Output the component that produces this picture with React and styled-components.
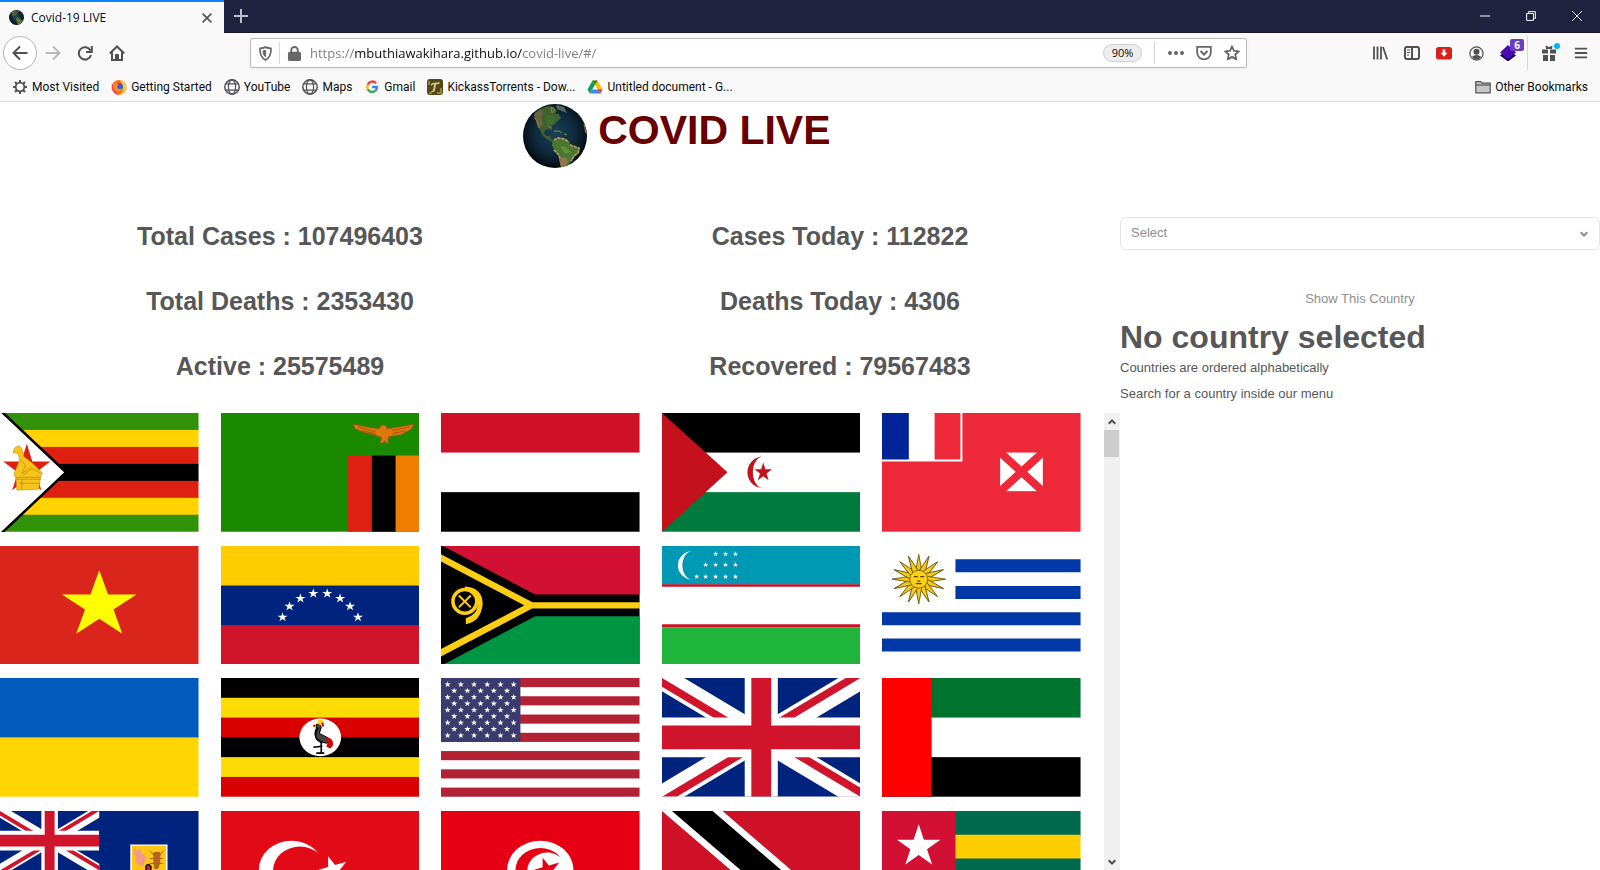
import React, { useRef, useState } from "react";
import styled, { createGlobalStyle } from "styled-components";

const GlobalStyle = createGlobalStyle`
  *, *::before, *::after { box-sizing: border-box; }
  body { margin: 0; background: #fff; font-family: "Liberation Sans", Arial, sans-serif; }
  button, input, select { font: inherit; }
  button { border: 0; padding: 0; background: none; cursor: pointer; }
  h1, h2, p, ul { margin: 0; padding: 0; }
`;

const uiFont = `"Open Sans", "Noto Sans", sans-serif`;

/* ---------- browser chrome ---------- */

const Window = styled.div`
  height: 100vh;
  display: flex;
  flex-direction: column;
  overflow: hidden;
`;

const TabStrip = styled.header`
  display: flex;
  align-items: stretch;
  height: 33px;
  flex: none;
  background: #202340;
  border-bottom: 1px solid #14162b;
`;

const Tab = styled.div`
  display: flex;
  align-items: center;
  gap: 7px;
  width: 224px;
  height: 33px;
  padding: 0 12px 0 9px;
  background: #f9f9fa;
  border-top: 2px solid #0a84ff;
  font-family: ${uiFont};
  font-size: 12px;
  color: #0c0c0d;
`;

const TabTitle = styled.span`
  flex: 1;
`;

const IconButton = styled.button`
  display: flex;
  align-items: center;
  justify-content: center;
  flex: none;
  width: ${(p) => p.$w || 32}px;
  height: ${(p) => p.$h || 32}px;
  color: ${(p) => p.$color || "#505055"};
  position: relative;
`;

const WindowControls = styled.div`
  display: flex;
  margin-left: auto;
`;

const Toolbar = styled.nav`
  display: flex;
  align-items: center;
  height: 40px;
  flex: none;
  padding: 0 8px 0 3px;
  background: #f9f9fa;
`;

const BackButton = styled(IconButton)`
  width: 34px;
  height: 34px;
  border: 1px solid #b5b5b7;
  border-radius: 50%;
  background: #fff;
`;

const UrlBar = styled.form`
  display: flex;
  align-items: center;
  flex: 1;
  height: 30px;
  margin: 0 117px;
  background: #fff;
  border: 1px solid #b9b9bb;
  border-radius: 2px;
  box-shadow: 0 1px 3px rgba(0, 0, 0, 0.06);
`;

const Divider = styled.span`
  flex: none;
  width: 1px;
  height: ${(p) => p.$h || 22}px;
  margin-left: ${(p) => p.$before || 0}px;
  margin-right: ${(p) => p.$after || 0}px;
  background: #d7d7db;
`;

const UrlInput = styled.input`
  flex: 1;
  min-width: 0;
  height: 26px;
  margin-left: 2px;
  padding: 0;
  border: 0;
  outline: 0;
  font-family: ${uiFont};
  font-size: 13px;
  color: #7b7b80;
  -webkit-text-fill-color: transparent;
  background: linear-gradient(to right, #7b7b80 45px, #0c0c0d 45px 212px, #7b7b80 212px);
  background-clip: text;
  -webkit-background-clip: text;
`;

const ZoomButton = styled.button`
  width: 39px;
  height: 18px;
  margin-right: 12px;
  border: 1px solid #cfcfd1;
  border-radius: 9px;
  background: #ededf0;
  font-family: ${uiFont};
  font-size: 11px;
  line-height: 16px;
  color: #0c0c0d;
`;

const Badge = styled.span`
  position: absolute;
  top: 3px;
  right: 0;
  width: 14px;
  height: 12px;
  border-radius: 2px;
  background: #6b3cc4;
  color: #fff;
  font: bold 10px/12px ${uiFont};
  text-align: center;
`;

const Dot = styled.span`
  position: absolute;
  top: 6px;
  right: 10px;
  width: 6px;
  height: 6px;
  border-radius: 50%;
  background: #00b3f4;
`;

const BookmarksBar = styled.nav`
  display: flex;
  align-items: center;
  height: 29px;
  flex: none;
  gap: 12px;
  padding: 0 12px;
  background: #f9f9fa;
  border-bottom: 1px solid #dcdcde;
  color: #505055;
`;

const Bookmark = styled.a`
  display: flex;
  align-items: center;
  gap: 4px;
  color: inherit;
  text-decoration: none;
  white-space: nowrap;
  &:last-child { margin-left: auto; }
`;

const BookmarkLabel = styled.span`
  font-family: Roboto, ${uiFont};
  font-size: 12px;
  color: #0c0c0d;
`;

/* ---------- page ---------- */

const Page = styled.main`
  flex: 1;
  min-height: 0;
  display: flex;
  flex-direction: column;
  color: #575757;
`;

const Banner = styled.header`
  display: flex;
  align-items: flex-start;
  gap: 11px;
  flex: none;
  height: 102px;
  padding-top: 2px;
  padding-left: 32.7%;
`;

const Title = styled.h1`
  font-size: 41px;
  line-height: 52px;
  color: #690000;
`;

const Columns = styled.div`
  flex: 1;
  min-height: 0;
  display: grid;
  grid-template-columns: 7fr 3fr;
`;

const Overview = styled.section`
  min-height: 0;
  display: flex;
  flex-direction: column;
`;

const Stats = styled.div`
  display: grid;
  grid-template-columns: 1fr 1fr;
  grid-auto-rows: 65px;
  flex: none;
  padding-bottom: 14px;
`;

const Stat = styled.h2`
  font-size: 25px;
  line-height: 65px;
  text-align: center;
`;

const FlagPanel = styled.div`
  flex: 1;
  min-height: 0;
  display: flex;
`;

const FlagList = styled.ul`
  flex: 1;
  display: grid;
  grid-template-columns: repeat(5, 1fr);
  align-content: start;
  row-gap: 14px;
  margin-right: 1px;
  overflow: hidden;
  list-style: none;
`;

const FlagImage = styled.svg`
  display: block;
  width: 90%;
  aspect-ratio: 199 / 119;
`;

const Scrollbar = styled.div`
  display: flex;
  flex-direction: column;
  width: 16px;
  flex: none;
  background: #f0f0f0;
`;

const Thumb = styled.div`
  width: 15px;
  height: 27px;
  margin-bottom: auto;
  background: #cdcdcd;
`;

const Sidebar = styled.aside`
  display: flex;
  flex-direction: column;
  padding-top: 13px;
`;

const SelectBox = styled.div`
  position: relative;
  height: 33px;
  svg {
    position: absolute;
    right: 12px;
    top: 13px;
    pointer-events: none;
  }
`;

const Select = styled.select`
  appearance: none;
  width: 100%;
  height: 33px;
  padding: 0 30px 2px 10px;
  border: 1px solid #e5e5ea;
  border-radius: 6px;
  background: #fff;
  color: #8e8e93;
  font-size: 13px;
`;

const ShowButton = styled.button`
  align-self: center;
  margin: 33px 0 6px;
  padding: 0 11px;
  font-size: 13px;
  line-height: 32px;
  color: #8e8e93;
`;

const Heading = styled.h2`
  margin-bottom: 2px;
  font-size: 32px;
  line-height: 32px;
`;

const Note = styled.p`
  font-size: 13px;
  line-height: 26px;
`;

/* ---------- icons ---------- */

const Svg = ({ s = 16, children, ...rest }) => (
  <svg width={s} height={s} viewBox="0 0 16 16" fill="none" stroke="currentColor" strokeWidth="2" aria-hidden="true" {...rest}>
    {children}
  </svg>
);

const Globe = ({ size, id }) => (
  <svg width={size} height={size} viewBox="0 0 64 64" aria-hidden="true">
    <defs>
      <radialGradient id={id} cx="50%" cy="46%" r="52%">
        <stop offset="0" stopColor="#1a4258" />
        <stop offset="0.6" stopColor="#0f2a3d" />
        <stop offset="0.9" stopColor="#071620" />
        <stop offset="1" stopColor="#02070b" />
      </radialGradient>
      <clipPath id={id + "c"}><circle cx="32" cy="32" r="32" /></clipPath>
    </defs>
    <g clipPath={`url(#${id}c)`}>
      <rect width="64" height="64" fill={`url(#${id})`} />
      <path d="M12 9l5-4 8-3 6 1 3 4-2 3 4 0 2 4-3 3-3 3-3 2 0 4-3-1-4 1-1 4 3 2 3 0 1 3 4 2 2 2-2 0-7-3-5-4-3-6-3-4-1-6-2-2z" fill="#40602e" />
      <path d="M12 9l6-4 2 4-2 5 2 6-3 4-3-4-1-6-2-2z" fill="#6b6340" />
      <path d="M22 12l7-1 5 4-4 5-6 1z" fill="#3f6d2c" />
      <path d="M33 1l8 2 3 6-5-2-5-2z" fill="#7e867c" opacity=".7" />
      <path d="M28 3l4 3-3 3zM12 14l3 5 1 5M25 22l3 2" stroke="#8b8058" fill="none" />
      <path d="M31 27l5 0 3 2M41 30l3 1" stroke="#76945a" fill="none" />
      <path d="M30 36l5-3 6 1 5 3 1 3 5 2 5 3-1 4-4 3-2 4-4 4-2 5-4 1-1-9-4-6-4-5-2-5z" fill="#4b7631" />
      <path d="M31 36l4-2 6 1 5 3M47 41l9 3-1 5-4 3-3 5M31 46l5 5 2 7 1 7" stroke="#c09a62" strokeWidth="1.6" strokeDasharray="3 1" fill="none" />
      <path d="M36 55l7-2 2 5-4 6-3-1z" fill="#95744d" />
      <path d="M37 42l6 1 5 5-6 2z" fill="#5e9136" />
      <path d="M61 20l2 9-1-3" stroke="#9a7650" fill="none" />
    </g>
  </svg>
);

const Gear = () => (
  <Svg>
    <circle cx="8" cy="8" r="4.300" strokeWidth="1.800" />
    {[0, 45, 90, 135, 180, 225, 270, 315].map((a) => (
      <path key={a} d="M8 4V1" transform={`rotate(${a} 8 8)`} />
    ))}
  </Svg>
);

const Firefox = () => (
  <Svg stroke="none">
    <circle cx="8" cy="8.4" r="7.4" fill="#ff6a2b" />
    <path d="M9 .5c3.500 1.500 7 4.500 6.400 9C14.500 13 11.500 15.800 8 15.800c3-2 5-5 3.500-8.800z" fill="#ffc933" />
    <path d="M1 5c-.8 5 2 10.500 7 10.700-3-1.500-5-5-4-9z" fill="#ff3b5c" />
    <circle cx="8" cy="8" r="4" fill="#2d5fd8" />
    <path d="M2.500 3C4 4.500 6 4.500 8 5.500 6.500 6.500 5.500 8 7 9.500c2 1.500 4-.3 5-.5-1 3-4 4.500-7 3C2 10.500 1.500 6 2.500 3z" fill="#ff8a20" />
  </Svg>
);

const WebGlobe = () => (
  <Svg strokeWidth="1.200">
    <circle cx="8" cy="8" r="7.2" strokeWidth="1.500" />
    <ellipse cx="8" cy="8" rx="3.600" ry="7.200" />
    <path d="M2 4.800h12M2 11.200h12" />
  </Svg>
);

const Google = () => (
  <Svg strokeWidth="2.400">
    <path d="M12 4.200A5 5 0 0 0 3.700 5.700" stroke="#ea4335" />
    <path d="M3.700 5.700a5 5 0 0 0 0 4.600" stroke="#fbbc05" />
    <path d="M3.700 10.300A5 5 0 0 0 11.200 11.900" stroke="#34a853" />
    <path d="M11.200 11.900A5 5 0 0 0 13 8H8" stroke="#4285f4" />
  </Svg>
);

const Scroll = () => (
  <Svg stroke="none">
    <rect width="16" height="16" rx="3" fill="#51461c" />
    <path d="M4 5c2-2 6-1 9-2l-1 2-3 .4L8 11c0 2-3 3-4 1 2 .5 2-1 2.500-3L7 5.500C5.500 5.400 5 6 4 7z" fill="#d8c878" />
    <path d="M2 2v4M14 9v5h-4M2 14h3" stroke="#948640" />
  </Svg>
);

const Drive = () => (
  <Svg stroke="none">
    <path d="M5.500 1.500 .5 10.500l2.300 4L8 5.800z" fill="#0f9d58" />
    <path d="M5.500 1.500h5l5 9h-4.700z" fill="#ffba00" />
    <path d="M5 10.500h10.500l-2.300 4H2.800z" fill="#4285f4" />
    <path d="M5.500 1.500h5L8 5.800z" fill="#188038" />
    <path d="M10.800 10.500h4.700l-2.300 4z" fill="#ea4335" />
  </Svg>
);

const Folder = () => (
  <Svg strokeWidth="1.200">
    <path d="M.8 13.800V2.600h4.800l1.600 1.600h8v9.600z" fill="#c8c8ca" />
    <path d="M1 6h14" />
  </Svg>
);

/* ---------- flags (200 x 120 drawing units) ---------- */

const starPoints = (cx, cy, rx, ry, turn = 0) =>
  Array.from({ length: 10 }, (_, i) => {
    const k = i % 2 ? 0.382 : 1;
    const a = ((i * 36 - 90 + turn) * Math.PI) / 180;
    return `${(cx + rx * k * Math.cos(a)).toFixed(2)},${(cy + ry * k * Math.sin(a)).toFixed(2)}`;
  }).join(" ");

const Star = ({ x, y, rx, ry = rx, turn, fill = "#fff" }) => (
  <polygon points={starPoints(x, y, rx, ry, turn)} fill={fill} />
);

const Stripes = ({ colors }) =>
  colors.map((c, i) => (
    <rect key={i} y={(120 / colors.length) * i} width="200" height={120 / colors.length + (i < colors.length - 1 ? 1 : 0)} fill={c} />
  ));

const UnionJack = ({ w, h, id }) => (
  <svg width={w} height={h} viewBox="0 0 60 30" preserveAspectRatio="none">
    <clipPath id={id}>
      <path d="M30 15h30v15zv15H0zH0V0zV0h30z" />
    </clipPath>
    <rect width="60" height="30" fill="#00247d" />
    <path d="M0 0l60 30M60 0L0 30" stroke="#fff" strokeWidth="6" />
    <path d="M0 0l60 30M60 0L0 30" stroke="#cf142b" strokeWidth="4" clipPath={`url(#${id})`} />
    <path d="M30 0v30M0 15h60" stroke="#fff" strokeWidth="10" />
    <path d="M30 0v30M0 15h60" stroke="#cf142b" strokeWidth="6" />
  </svg>
);

const flags = [
  ["Zimbabwe", <>
    <Stripes colors={["#319208", "#ffd200", "#de2010", "#000", "#de2010", "#ffd200", "#319208"]} />
    <path d="M1-2l65.500 62L1 122H-5V-2z" fill="#fff" stroke="#000" strokeWidth="2.600" />
    <Star x={27} y={57} rx={25} ry={26} fill="#de2010" />
    <path d="M13 40l2-5 4-2 3 3 2 8 9 7 10 10-2 3-2 13-22 1-1-12-2-4 6-15-2-6z" fill="#f9c41a" stroke="#b98a12" strokeWidth=".6" />
    <path d="M16 65h25M16 67h25M19 71h21M22 67v10M20 47l6 6-4 8 10-6M23 63l10-7 8 5" fill="none" stroke="#a77c10" strokeWidth=".6" />
  </>],
  ["Zambia", <>
    <rect width="200" height="120" fill="#198a00" />
    <rect x="128" y="43" width="24" height="77" fill="#de2010" />
    <rect x="152" y="43" width="24" height="77" />
    <rect x="176" y="43" width="24" height="77" fill="#ef7d00" />
    <path d="M133 11l14 3 12 2 3-4 5 1v3l12-2 16-3-4 6-10 5-12 2-1 4 2 3-4-1-1-2-3 3-2-2 2-4-5-2-12-3-10-4z" fill="#e0770a" stroke="#8a4c0a" strokeWidth=".7" />
    <path d="M138 14l18 5M142 18l14 3M172 18l18-4M172 21l14-3" stroke="#8a4c0a" strokeWidth=".8" />
  </>],
  ["Yemen", <Stripes colors={["#ce1126", "#fff", "#000"]} />],
  ["Western Sahara", <>
    <Stripes colors={["#000", "#fff", "#007a3d"]} />
    <path d="M0 0l66 60L0 120z" fill="#c4111b" />
    <path d="M102 44a16 16 0 0 0 0 32a10.500 16 0 0 1 0-32z" fill="#c4111b" />
    <Star x={102} y={60} rx={9.2} ry={10} fill="#c4111b" />
  </>],
  ["Wallis and Futuna", <>
    <rect width="200" height="120" fill="#ed2939" />
    <rect width="81" height="49" fill="#fff" />
    <rect width="27" height="47" fill="#002395" />
    <rect x="53" width="26" height="47" fill="#ed2939" />
    <rect x="119" y="40" width="43" height="39" fill="#fff" />
    <path d="M117 38l47 43M164 38l-47 43" stroke="#ed2939" strokeWidth="8" />
  </>],
  ["Vietnam", <>
    <rect width="200" height="120" fill="#da251d" />
    <Star x={100} y={60} rx={39.5} ry={35.5} fill="#ff0" />
  </>],
  ["Venezuela", <>
    <Stripes colors={["#fc0", "#00247d", "#cf142b"]} />
    {[[62, 72], [69, 61], [80, 53], [93, 48], [107, 48], [120, 53], [130, 61], [138, 72]].map(([x, y]) => (
      <Star key={x} x={x} y={y} rx={5.4} ry={5} />
    ))}
  </>],
  ["Vanuatu", <>
    <rect width="200" height="120" />
    <path d="M2 0h198v49H95z" fill="#d21034" />
    <path d="M2 120h198V71H95z" fill="#009543" />
    <path d="M-4 10l95 50L-4 110M90 60h111" fill="none" stroke="#fdce12" strokeWidth="6.500" />
    <circle cx="24" cy="56" r="12" fill="none" stroke="#fdce12" strokeWidth="3.500" />
    <path d="M24 41q18 1 18 18-2 18-17 20v-6q11-3 12-13 0-14-13-16z" fill="#fdce12" />
    <path d="M18 50l12 12M30 50L18 62" stroke="#fdce12" strokeWidth="2" />
  </>],
  ["Uzbekistan", <>
    <rect width="200" height="120" fill="#fff" />
    <rect width="200" height="39" fill="#0099b5" />
    <path d="M0 40h200M0 80.500h200" stroke="#ce1126" strokeWidth="2.600" />
    <rect y="82" width="200" height="38" fill="#1eb53a" />
    <path d="M31 5a15 14.500 0 0 0 0 29a10.500 14.500 0 0 1 0-29z" fill="#fff" />
    {[[54, 8], [64, 8], [74, 8], [44, 19], [54, 19], [64, 19], [74, 19], [35, 31], [44, 31], [54, 31], [64, 31], [74, 31]].map(([x, y]) => (
      <Star key={x + "-" + y} x={x} y={y} rx={2.8} />
    ))}
  </>],
  ["Uruguay", <>
    <rect width="200" height="120" fill="#fff" />
    <path d="M74 20h126M74 47h126M0 73.500h200M0 100h200" stroke="#0038a8" strokeWidth="13.200" />
    {Array.from({ length: 16 }, (_, i) => (
      <path key={i} d="M-3-7Q-2-14 0-25Q2-14 3-7z" transform={`translate(37 33.500) scale(1.080 1) rotate(${i * 22.5})`} fill="#f5cb12" stroke="#5a4a10" strokeWidth=".8" />
    ))}
    <circle cx="37" cy="33.500" r="9" fill="#fcd116" stroke="#6b5710" strokeWidth=".8" />
    <path d="M32 31h4M38.500 31h4M34 38h6M35.500 35.500h3" stroke="#5a3f0a" strokeWidth="1.400" />
  </>],
  ["Ukraine", <Stripes colors={["#005bbb", "#ffd500"]} />],
  ["Uganda", <>
    <Stripes colors={["#000", "#fcdc04", "#d90000", "#000", "#fcdc04", "#d90000"]} />
    <ellipse cx="100" cy="60" rx="21" ry="19" fill="#fff" />
    <path d="M96 47q4-2 5 3l-2 6 8 4 5 4-6 2-9-3q-4-6-1-12z" fill="#444" stroke="#000" />
    <path d="M105 60q8 0 8 7-1 4-4 4l-3-2 2-4z" fill="#d90000" />
    <path d="M97 44l2-2 4 1-1 4h-4z" fill="#fcdc04" />
    <path d="M95 48l-2 1M102 45l1 4" stroke="#d90000" strokeWidth="2" />
    <path d="M101 66v9M96 76h8M102 69l-9 1M98 50q-5 7-1 12l5 4" stroke="#000" strokeWidth="1.700" fill="none" />
  </>],
  ["United States", <>
    <Stripes colors={Array.from({ length: 13 }, (_, i) => (i % 2 ? "#fff" : "#b22234"))} />
    <rect width="80" height="64.600" fill="#3c3b6e" />
    {Array.from({ length: 9 }, (_, r) =>
      Array.from({ length: r % 2 ? 5 : 6 }, (_, c) => (
        <Star key={r + "-" + c} x={(r % 2 ? 13.3 : 6.7) + c * 13.3} y={6.5 + r * 6.45} rx={3.4} ry={3.2} />
      ))
    )}
  </>],
  ["United Kingdom", <UnionJack w="200" h="120" id="jackFull" />],
  ["United Arab Emirates", <>
    <Stripes colors={["#00732f", "#fff", "#000"]} />
    <rect width="50" height="120" fill="#f00" />
  </>],
  ["Turks and Caicos Islands", <>
    <rect width="200" height="120" fill="#00247d" />
    <UnionJack w="100" h="60" id="jackCanton" />
    <path d="M132 34.500h36v32q-2 14-18 20-16-6-18-20z" fill="#ffc715" stroke="#fff" strokeWidth="1.500" />
    <path d="M134 38l4 2 3-2 2 5 4 3-2 8-4 2-4-5-1-6z" fill="#f3988a" />
    <path d="M155 42h6v10l-2 6h-3l-1-6zM151 40l5 6M165 40l-5 6M151 48h13M151 53h13" fill="#b5651d" stroke="#a8641c" strokeWidth="1" />
    <path d="M147 61v-5q2-4 5 0v5z" fill="#e0182d" stroke="#111" strokeWidth="1.500" />
  </>],
  ["Turkey", <>
    <rect width="200" height="120" fill="#e30a17" />
    <ellipse cx="71" cy="60" rx="33" ry="30" fill="#fff" />
    <ellipse cx="79.500" cy="60" rx="27" ry="24" fill="#e30a17" />
    <Star x={113} y={60} rx={16.5} ry={15} turn={-90} />
  </>],
  ["Tunisia", <>
    <rect width="200" height="120" fill="#e70013" />
    <ellipse cx="100" cy="60" rx="33.500" ry="30" fill="#fff" />
    <ellipse cx="100" cy="60" rx="25" ry="22.500" fill="#e70013" />
    <ellipse cx="107" cy="60" rx="20" ry="18" fill="#fff" />
    <Star x={107} y={60} rx={15} ry={13.5} turn={-90} fill="#e70013" />
  </>],
  ["Trinidad and Tobago", <>
    <rect width="200" height="120" fill="#ce1126" />
    <path d="M0 0h61l139 120h-61z" fill="#fff" />
    <path d="M10 0h41l139 120h-41z" />
  </>],
  ["Togo", <>
    <Stripes colors={["#006a4e", "#ffce00", "#006a4e", "#ffce00", "#006a4e"]} />
    <rect width="74" height="72" fill="#d21034" />
    <Star x={37} y={36} rx={23} ry={22.5} />
  </>],
];

const stats = [
  "Total Cases : 107496403",
  "Cases Today : 112822",
  "Total Deaths : 2353430",
  "Deaths Today : 4306",
  "Active : 25575489",
  "Recovered : 79567483",
];

const bookmarks = [
  ["Most Visited", <Gear />],
  ["Getting Started", <Firefox />],
  ["YouTube", <WebGlobe />],
  ["Maps", <WebGlobe />],
  ["Gmail", <Google />],
  ["KickassTorrents - Dow...", <Scroll />],
  ["Untitled document - G...", <Drive />],
  ["Other Bookmarks", <Folder />],
];

const Chevron = ({ up, color = "#505050" }) => (
  <svg width="8" height="8" viewBox="0 0 8 8" fill="none" stroke={color} strokeWidth="2" aria-hidden="true">
    <path d={up ? "M.7 5.800L4 2.500l3.300 3.300" : "M.7 2.200L4 5.500l3.300-3.300"} />
  </svg>
);

function BrowserChrome() {
  const [url, setUrl] = useState("https://mbuthiawakihara.github.io/covid-live/#/");
  return (
    <>
      <TabStrip>
        <Tab>
          <Globe size={15} id="favicon" />
          <TabTitle>Covid-19 LIVE</TabTitle>
          <IconButton $w={10} $h={16} aria-label="Close tab">
            <Svg s={10} strokeWidth="2.600"><path d="M1 1l14 14M15 1L1 15" /></Svg>
          </IconButton>
        </Tab>
        <IconButton $w={34} $color="#bfbfc9" aria-label="New tab">
          <Svg s={14} strokeWidth="2.300"><path d="M8 0v16M0 8h16" /></Svg>
        </IconButton>
        <WindowControls>
          <IconButton $w={46} $color="#fff" aria-label="Minimize">
            <Svg s={10} strokeWidth="1.600"><path d="M0 8h16" /></Svg>
          </IconButton>
          <IconButton $w={46} $color="#fff" aria-label="Restore">
            <Svg s={10} strokeWidth="1.600"><path d="M1 4h11v11H1zM4 4V1h11v11h-3" /></Svg>
          </IconButton>
          <IconButton $w={46} $color="#fff" aria-label="Close window">
            <Svg s={10} strokeWidth="1.400"><path d="M0 0l16 16M16 0L0 16" /></Svg>
          </IconButton>
        </WindowControls>
      </TabStrip>

      <Toolbar>
        <BackButton aria-label="Back"><Svg><path d="M15.500 8H1.500M8 1.500L1.500 8 8 14.500" /></Svg></BackButton>
        <IconButton $color="#b9b9bb" aria-label="Forward"><Svg><path d="M.5 8h14M8 1.500L14.500 8 8 14.500" /></Svg></IconButton>
        <IconButton aria-label="Reload">
          <Svg><path d="M13.500 5.500A6.200 6.200 0 1 0 14 10M14.800 1v6H9" /></Svg>
        </IconButton>
        <IconButton aria-label="Home">
          <Svg><path d="M.8 8.500L8 1.500l7.200 7M3 7.500V15h10V7.500M8 15v-5" /><path d="M6.500 9.500h3V15h-3z" fill="currentColor" strokeWidth="1" /></Svg>
        </IconButton>
        <UrlBar onSubmit={(e) => e.preventDefault()}>
          <IconButton as="span" $w={28} $h={28} $color="#66666b">
            <Svg s={15} strokeWidth="1.800"><path d="M8 1.200c2 1 4 1.300 5.800 1.300.4 6-1.300 10-5.800 12.500C3.500 12.500 1.800 8.500 2.200 2.500 4 2.500 6 2.200 8 1.200z" /><path d="M8 4.500v7C6 10 5.400 8 5.400 5.200z" fill="currentColor" strokeWidth="1" /></Svg>
          </IconButton>
          <Divider />
          <IconButton as="span" $w={28} $h={28} $color="#66666b">
            <Svg s={15}><rect x="2" y="7" width="12" height="8" rx="1" fill="currentColor" /><path d="M4.500 7V4.500a3.500 3.500 0 0 1 7 0V7" /></Svg>
          </IconButton>
          <UrlInput aria-label="Address" value={url} onChange={(e) => setUrl(e.target.value)} spellCheck={false} />
          <ZoomButton type="button">90%</ZoomButton>
          <Divider $after={7} />
          <IconButton type="button" $w={28} $h={28} $color="#66666b" aria-label="Page actions">
            <Svg stroke="none" fill="currentColor"><circle cx="2" cy="8" r="2" /><circle cx="8" cy="8" r="2" /><circle cx="14" cy="8" r="2" /></Svg>
          </IconButton>
          <IconButton type="button" $w={28} $h={28} $color="#66666b" aria-label="Save to Pocket">
            <Svg strokeWidth="1.800"><path d="M1.200 1.800h13.600v5.700a6.800 6.800 0 0 1-13.600 0z" /><path d="M4.500 6L8 9.500 11.500 6" strokeWidth="2" /></Svg>
          </IconButton>
          <IconButton type="button" $w={28} $h={28} $color="#66666b" aria-label="Bookmark this page">
            <Svg strokeWidth="1.800" strokeLinejoin="round"><path d="M8 1.300l2 4.500 4.900.5-3.700 3.200 1.100 4.900L8 11.900l-4.300 2.500 1.100-4.900L1.100 6.300 6 5.800z" /></Svg>
          </IconButton>
        </UrlBar>
        <IconButton aria-label="Library">
          <Svg><path d="M2 1.500v13M5.500 1.500v13M9 1.500v13M11 2l4.200 12.500" strokeWidth="1.800" /></Svg>
        </IconButton>
        <IconButton aria-label="Sidebars">
          <Svg><rect x="1" y="2" width="14" height="12" rx="2" /><path d="M8 2v12" /><path d="M3 5h3M3 7.500h3M3 10h2" strokeWidth="1" /></Svg>
        </IconButton>
        <IconButton aria-label="Video downloader">
          <Svg stroke="none"><rect y="2" width="16" height="12.500" rx="2.500" fill="#d8201f" /><path d="M6.700 4.500h2.600v3.200h2.200L8 11.800 4.500 7.700h2.200z" fill="#fff" /></Svg>
        </IconButton>
        <IconButton aria-label="Account">
          <Svg s={15} strokeWidth="1.300"><circle cx="8" cy="8" r="7" /><circle cx="8" cy="6" r="3.200" fill="currentColor" stroke="none" /><path d="M3 11.500q5-4 10 0-2 3-5 3t-5-3z" fill="currentColor" stroke="none" /></Svg>
        </IconButton>
        <IconButton $h={34} aria-label="Layers extension">
          <Svg stroke="none"><path d="M0 10.500L8 4l8 6.500-8 6z" fill="#21006b" /><path d="M0 7.500L8 0l8 7.500L8 14z" fill="#4a0cb0" /></Svg>
          <Badge>6</Badge>
        </IconButton>
        <Divider $h={34} $before={3} />
        <IconButton $w={42} aria-label="What's new">
          <Svg stroke="none" fill="currentColor"><path d="M1 4.500h6v4H1zM9 4.500h6v4H9zM2 10h5v6H2zM9 10h5v6H9zM4.500.5L8 2l3.500-1.500L11 4H5z" /></Svg>
          <Dot />
        </IconButton>
        <IconButton $w={22} aria-label="Menu">
          <Svg s={14} strokeWidth="2.200"><path d="M1 3h14M1 8h14M1 13h14" /></Svg>
        </IconButton>
      </Toolbar>

      <BookmarksBar>
        {bookmarks.map(([label, icon]) => (
          <Bookmark key={label} href="#">{icon}<BookmarkLabel>{label}</BookmarkLabel></Bookmark>
        ))}
      </BookmarksBar>
    </>
  );
}

export default function App() {
  const list = useRef(null);
  const scroll = (by) => list.current.scrollBy({ top: by });
  return (
    <Window>
      <GlobalStyle />
      <BrowserChrome />
      <Page>
        <Banner>
          <Globe size={64} id="globe" />
          <Title>COVID LIVE</Title>
        </Banner>
        <Columns>
          <Overview>
            <Stats>{stats.map((s) => <Stat key={s}>{s}</Stat>)}</Stats>
            <FlagPanel>
              <FlagList ref={list}>
                {flags.map(([name, drawing]) => (
                  <li key={name}>
                    <FlagImage viewBox="0 0 200 120" preserveAspectRatio="none" role="img" aria-label={name}>
                      {drawing}
                    </FlagImage>
                  </li>
                ))}
              </FlagList>
              <Scrollbar>
                <IconButton $w={16} $h={17} aria-label="Scroll up" onClick={() => scroll(-133)}><Chevron up /></IconButton>
                <Thumb />
                <IconButton $w={16} $h={17} aria-label="Scroll down" onClick={() => scroll(133)}><Chevron /></IconButton>
              </Scrollbar>
            </FlagPanel>
          </Overview>
          <Sidebar>
            <SelectBox>
              <Select aria-label="Country" defaultValue="">
                <option value="">Select</option>
                {flags.map(([name]) => <option key={name}>{name}</option>)}
              </Select>
              <Chevron color="#8e8e93" />
            </SelectBox>
            <ShowButton>Show This Country</ShowButton>
            <Heading>No country selected</Heading>
            <Note>Countries are ordered alphabetically</Note>
            <Note>Search for a country inside our menu</Note>
          </Sidebar>
        </Columns>
      </Page>
    </Window>
  );
}
